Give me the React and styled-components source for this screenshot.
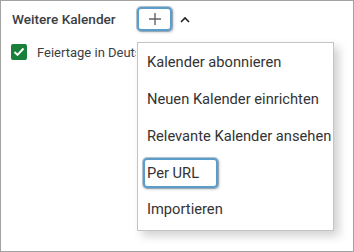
import React from "react";
import styled, { createGlobalStyle } from "styled-components";

const GlobalStyle = createGlobalStyle`
  body {
    margin: 0;
    background: #fff;
    font-family: Roboto, "Liberation Sans", sans-serif;
  }
`;

const Frame = styled.div`
  position: relative;
  width: 354px;
  height: 252px;
  box-sizing: border-box;
  border: 1px solid #a3a3a3;
  overflow: hidden;
`;

const Header = styled.div`
  display: flex;
  align-items: center;
  height: 24px;
  margin-top: 6px;
  padding-left: 11px;
`;

const Title = styled.div`
  width: 125px;
  font-size: 13.6px;
  font-weight: 500;
  color: #3c4043;
`;

const AddButton = styled.div`
  width: 35px;
  height: 24px;
  box-sizing: border-box;
  border: 2px solid #5b9cc8;
  border-radius: 4px;
  box-shadow: 0 0 0 1px rgba(50, 100, 140, 0.35), 1px 1px 3px rgba(0, 0, 0, 0.3);
  display: flex;
  align-items: center;
  justify-content: center;
`;

const Chevron = styled.div`
  margin-left: 8px;
  display: flex;
  align-items: center;
`;

const CalRow = styled.div`
  display: flex;
  align-items: center;
  gap: 10px;
  margin-top: 13px;
  padding-left: 10px;
`;

const Check = styled.div`
  width: 16px;
  height: 16px;
  border-radius: 2px;
  background: #188038;
  display: flex;
  align-items: center;
  justify-content: center;
`;

const CalName = styled.div`
  width: 99px;
  overflow: hidden;
  font-size: 13px;
  color: #3c4043;
  white-space: nowrap;
`;

const Menu = styled.div`
  position: absolute;
  left: 136px;
  top: 41px;
  width: 197px;
  height: 189px;
  box-sizing: border-box;
  background: #fff;
  border: 1px solid #c4c4c4;
  box-shadow: 5px 5px 9px rgba(0, 0, 0, 0.18);
  padding-top: 1px;
`;

const Item = styled.div`
  height: 36.75px;
  display: flex;
  align-items: center;
  padding-left: 9px;
  font-size: 14.7px;
  color: #333;
  white-space: nowrap;
`;

const Label = styled.span`
  ${({ $highlighted }) =>
    $highlighted &&
    `
    margin-left: -4px;
    padding: 4px 17px 4px 2px;
    border: 2px solid #5b9cc8;
    border-radius: 4px;
    box-shadow: 0 0 0 1px rgba(50, 100, 140, 0.35), 1px 1px 3px rgba(0, 0, 0, 0.3);
  `}
`;

const items = [
  "Kalender abonnieren",
  "Neuen Kalender einrichten",
  "Relevante Kalender ansehen",
  "Per URL",
  "Importieren",
];

export default function App() {
  return (
    <>
      <GlobalStyle />
      <Frame>
        <Header>
          <Title>Weitere Kalender</Title>
          <AddButton>
            <svg width="14" height="14" viewBox="0 0 14 14">
              <path d="M7 1v12M1 7h12" stroke="#5f6368" strokeWidth="1.4" />
            </svg>
          </AddButton>
          <Chevron>
            <svg width="10" height="7" viewBox="0 0 10 7">
              <path d="M1 6l4-4 4 4" stroke="#202124" strokeWidth="1.6" fill="none" />
            </svg>
          </Chevron>
        </Header>
        <CalRow>
          <Check>
            <svg width="12" height="10" viewBox="0 0 12 10">
              <path d="M1.5 5l3 3 6-6.5" stroke="#fff" strokeWidth="1.9" fill="none" />
            </svg>
          </Check>
          <CalName>Feiertage in Deutschland</CalName>
        </CalRow>
        <Menu>
          {items.map((t) => (
            <Item key={t}>
              <Label $highlighted={t === "Per URL"}>{t}</Label>
            </Item>
          ))}
        </Menu>
      </Frame>
    </>
  );
}
